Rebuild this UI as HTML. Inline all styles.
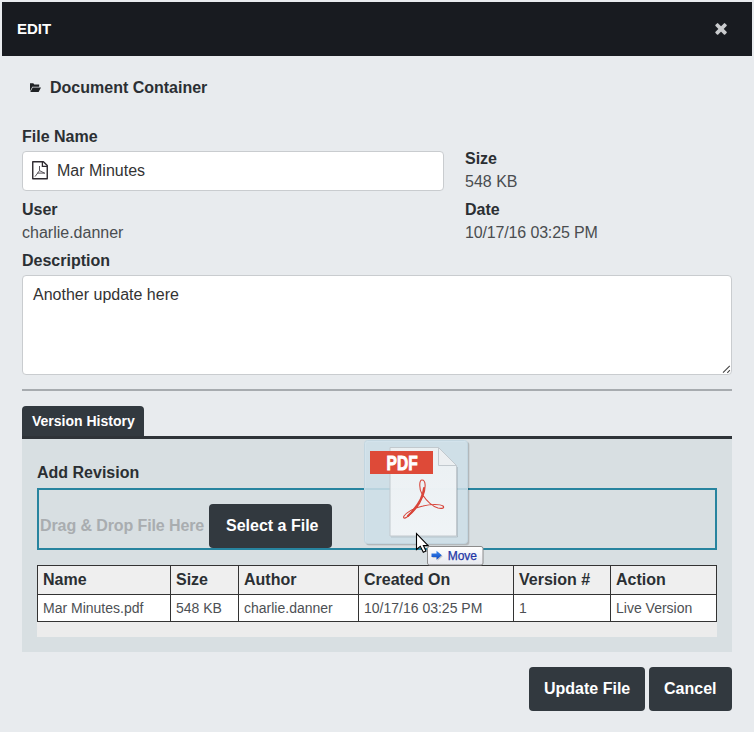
<!DOCTYPE html>
<html><head><meta charset="utf-8">
<style>
*{box-sizing:border-box}
html,body{margin:0;padding:0}
body{width:754px;height:732px;overflow:hidden;position:relative;background:#e8ebee;font-family:"Liberation Sans",sans-serif;color:#333}
.a{position:absolute;white-space:nowrap}
.b16{font-weight:bold;font-size:16px;line-height:16px;color:#2b2f33}
.r16{font-size:16px;line-height:16px;color:#4a4d50}
.b14{font-weight:bold;font-size:14px;line-height:14px}
.r14{font-size:14px;line-height:14px;color:#4d5054}
.btn{position:absolute;background:#32393f;border-radius:4px}
.bt{color:#fff}
</style></head><body>
<!-- header -->
<div class="a" style="left:2px;top:2px;width:750px;height:54px;background:#181b20"></div>
<div class="a" style="left:17px;top:21px;font-weight:bold;font-size:15px;line-height:15px;color:#fff">EDIT</div>
<svg class="a" style="left:713px;top:21px" width="16" height="16" viewBox="0 0 16 16"><g transform="translate(8.05 7.95) rotate(45)" fill="#c9cbcd"><rect x="-6.8" y="-1.9" width="13.6" height="3.8" rx="0.9"/><rect x="-1.9" y="-6.8" width="3.8" height="13.6" rx="0.9"/></g></svg>

<!-- folder -->
<svg class="a" style="left:30px;top:83px" width="12" height="10" viewBox="0 0 12 10"><path d="M0 0.3 H3.3 L4.3 1.5 H9.2 V3.7 H2.3 L0 8.3 Z" fill="#1e2124"/><path d="M2.7 4.6 H11 L8.6 8.9 H0.3 Z" fill="#1e2124"/></svg>
<div class="a b16" style="left:50px;top:80px">Document Container</div>

<div class="a b16" style="left:22px;top:129px">File Name</div>
<div class="a" style="left:22px;top:151px;width:422px;height:40px;background:#fff;border:1px solid #c9cccf;border-radius:4px"></div>
<svg class="a" style="left:32px;top:161px" width="17" height="20" viewBox="0 0 17 20"><path d="M0.75 0.7 H11.4 L15.25 4.5 V17.75 H0.75 Z" fill="none" stroke="#2e2a30" stroke-width="1.4" stroke-linejoin="round"/><path d="M10.4 0.7 V5.3 H15.25" fill="none" stroke="#2e2a30" stroke-width="1.3"/><path d="M7.5 5 V9.6 L3 15.6 M7.5 9.6 L12.8 12.3 M5.2 12.1 H12.8" fill="none" stroke="#454248" stroke-width="0.9"/></svg>
<div class="a r16" style="left:57px;top:163px;color:#333">Mar Minutes</div>

<div class="a b16" style="left:465px;top:151px">Size</div>
<div class="a r16" style="left:465px;top:174px">548 KB</div>
<div class="a b16" style="left:22px;top:202px">User</div>
<div class="a r16" style="left:22px;top:225px">charlie.danner</div>
<div class="a b16" style="left:465px;top:202px">Date</div>
<div class="a r16" style="left:465px;top:225px;letter-spacing:-0.15px">10/17/16 03:25 PM</div>
<div class="a b16" style="left:22px;top:253px">Description</div>
<div class="a" style="left:22px;top:275px;width:710px;height:100px;background:#fff;border:1px solid #c9cccf;border-radius:4px"></div>
<div class="a r16" style="left:33px;top:287px;color:#333">Another update here</div>
<svg class="a" style="left:718px;top:361px" width="14" height="14" viewBox="0 0 14 14"><path d="M5 11.6 L11.8 4.8 M9.3 11.8 L11.9 9.2" stroke="#444" stroke-width="1.1"/></svg>

<div class="a" style="left:22px;top:389px;width:710px;height:2px;background:#a7abaf"></div>

<!-- tabs -->
<div class="a" style="left:22px;top:406px;width:122px;height:31px;background:#32393f;border-radius:4px 4px 0 0"></div>
<div class="a b14" style="left:32px;top:414px;color:#fff">Version History</div>
<div class="a" style="left:22px;top:436px;width:710px;height:3px;background:#2e3338"></div>
<div class="a" style="left:22px;top:439px;width:710px;height:213px;background:#d8dfe2"></div>
<div class="a b16" style="left:37px;top:465px">Add Revision</div>
<div class="a" style="left:37px;top:488px;width:680px;height:62px;border:2px solid #27849f"></div>
<div class="a b16" style="left:40px;top:518px;color:#a9adb0;letter-spacing:-0.1px">Drag &amp; Drop File Here</div>
<div class="btn" style="left:209px;top:504px;width:123px;height:44px"></div>
<div class="a b16 bt" style="left:226px;top:518px">Select a File</div>

<!-- table -->
<div class="a" style="left:37px;top:565px;width:680px;height:72px;background:#ececec"></div>
<div class="a" style="left:37px;top:565px;width:680px;height:57px;border:1px solid #333;background:#fff"></div>
<div class="a" style="left:38px;top:566px;width:678px;height:28px;background:#efefef"></div>
<div class="a" style="left:37px;top:594px;width:680px;height:1px;background:#333"></div>
<div class="a" style="left:170px;top:565px;width:1px;height:57px;background:#333"></div>
<div class="a" style="left:238px;top:565px;width:1px;height:57px;background:#333"></div>
<div class="a" style="left:358px;top:565px;width:1px;height:57px;background:#333"></div>
<div class="a" style="left:513px;top:565px;width:1px;height:57px;background:#333"></div>
<div class="a" style="left:610px;top:565px;width:1px;height:57px;background:#333"></div>
<div class="a b16" style="left:43px;top:572px">Name</div>
<div class="a b16" style="left:176px;top:572px">Size</div>
<div class="a b16" style="left:244px;top:572px">Author</div>
<div class="a b16" style="left:364px;top:572px">Created On</div>
<div class="a b16" style="left:519px;top:572px">Version #</div>
<div class="a b16" style="left:616px;top:572px">Action</div>
<div class="a r14" style="left:43px;top:601px">Mar Minutes.pdf</div>
<div class="a r14" style="left:176px;top:601px">548 KB</div>
<div class="a r14" style="left:244px;top:601px">charlie.danner</div>
<div class="a r14" style="left:364px;top:601px">10/17/16 03:25 PM</div>
<div class="a r14" style="left:519px;top:601px">1</div>
<div class="a r14" style="left:616px;top:601px">Live Version</div>

<!-- footer buttons -->
<div class="btn" style="left:529px;top:667px;width:116px;height:44px"></div>
<div class="a b16 bt" style="left:544px;top:681px">Update File</div>
<div class="btn" style="left:649px;top:667px;width:83px;height:44px"></div>
<div class="a b16 bt" style="left:664px;top:681px">Cancel</div>

<!-- drag image -->
<svg class="a" style="left:360px;top:436px" width="130" height="134" viewBox="0 0 130 134">
<defs>
<linearGradient id="pg" x1="0" y1="0" x2="0" y2="1"><stop offset="0" stop-color="#eef2f4"/><stop offset="1" stop-color="#f3f6f8"/></linearGradient>
<linearGradient id="tt" x1="0" y1="0" x2="0" y2="1"><stop offset="0" stop-color="#ffffff"/><stop offset="1" stop-color="#e6e8ee"/></linearGradient>
<linearGradient id="ar" x1="0" y1="0" x2="0" y2="1"><stop offset="0" stop-color="#3b8cf0"/><stop offset="1" stop-color="#0b44c0"/></linearGradient>
</defs>
<rect x="6" y="6" width="103.5" height="103.5" rx="3" fill="#000" opacity="0.10"/><rect x="5.5" y="5.5" width="103.5" height="103.5" rx="3" fill="#000" opacity="0.08"/>
<rect x="4.5" y="4.5" width="103" height="103" rx="3" fill="#d4e5ef" fill-opacity="0.85" stroke="#c3d6e0" stroke-width="1"/>
<path d="M31 101 H97.5 V31" fill="none" stroke="#000" stroke-opacity="0.12" stroke-width="1"/><path d="M30 11.5 H78.5 L96.5 29.5 V100 H30 Z" fill="url(#pg)" fill-opacity="0.9" stroke="#c2c9ce" stroke-width="1"/>
<path d="M78.5 11.5 V29.5 H96.5 Z" fill="#eceff1" stroke="#c2c9ce" stroke-width="1"/>
<rect x="10" y="15" width="63" height="23" fill="#de4a38"/>
<text x="26.6" y="33.8" font-family="Liberation Sans" font-weight="bold" font-size="21" fill="#fff" stroke="#fff" stroke-width="0.9" textLength="31" lengthAdjust="spacingAndGlyphs">PDF</text>
<g transform="translate(35,38)" fill="none" stroke="#d8453a" stroke-linecap="round">
<path d="M27 6 C31 6 31 14 28 22 C25 30 19 38 12 43 C9 45 8 44 9 42 C11 39 18 34 28 32 C36 30 45 30 48 32 C50 34 47 35 43 34 C36 32 31 26 27 20 C24 15 24 6 27 6 Z" stroke-width="1.1"/>
<path d="M29 14 C28 24 22 33 13 42" stroke-width="2"/>
</g>
<rect x="67.5" y="110.5" width="55.5" height="18.5" rx="2" fill="url(#tt)" stroke="#8c8c8c" stroke-width="1"/>
<path d="M72 119.3 H77 V116 L82 119.3 L77 122.6 V119.3" fill="none"/>
<path d="M72.5 118.5 H77.5 V115.8 L82.8 120.3 L77.5 124.8 V122.1 H72.5 Z" fill="#000" opacity="0.18"/><path d="M71.5 117.5 H76.5 V114.8 L81.8 119.3 L76.5 123.8 V121.1 H71.5 Z" fill="url(#ar)"/>
<text x="87.7" y="123.8" font-family="Liberation Sans" font-size="12" fill="#2236a6" stroke="#2236a6" stroke-width="0.25">Move</text>
<path d="M56.5 97.5 V113.5 L60.3 110.3 L63.3 116.3 L66 115.1 L63.4 109.6 H68.2 Z" fill="#fff" stroke="#000" stroke-width="1.1" stroke-linejoin="miter"/>
</svg>
</body></html>
